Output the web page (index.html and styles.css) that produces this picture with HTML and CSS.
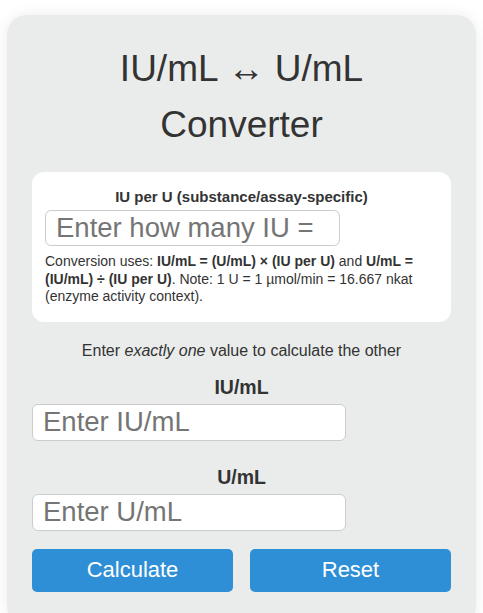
FILE: index.html
```html
<!DOCTYPE html>
<html lang="en">
<head>
    <meta charset="UTF-8">
    <title>IU/mL to U/mL Converter</title>
    <link rel="stylesheet" href="styles.css">
</head>
<body>
    <div class="card">
        <h1>IU/mL &harr; U/mL<br>Converter</h1>

        <div class="factor-box">
            <label class="factor-label" for="iuPerU">IU per U (substance/assay-specific)</label>
            <input id="iuPerU" class="factor-input" type="number" placeholder="Enter how many IU = 1 U">
            <p class="note">Conversion uses: <strong>IU/mL = (U/mL) × (IU per U)</strong> and <strong>U/mL = (IU/mL) ÷ (IU per U)</strong>. Note: 1 U = 1 µmol/min = 16.667 nkat (enzyme activity context).</p>
        </div>

        <p class="hint">Enter <em>exactly one</em> value to calculate the other</p>

        <div class="field">
            <label for="iuml">IU/mL</label>
            <input id="iuml" type="number" placeholder="Enter IU/mL">
        </div>
        <div class="field">
            <label for="uml">U/mL</label>
            <input id="uml" type="number" placeholder="Enter U/mL">
        </div>

        <div class="buttons">
            <button>Calculate</button>
            <button>Reset</button>
        </div>
    </div>
</body>
</html>
```

FILE: styles.css
```css
body { margin: 0; padding-top: 15px; font-family: "Liberation Sans", Arial, sans-serif; color: #333; background: #fff; }
.card {
    width: 419px; margin: 0 auto; padding: 26px 25px 25px; min-height: 560px;
    background: #eaeceb; border-radius: 20px; box-shadow: 0 0 14px rgba(0, 0, 0, 0.08);
}
h1 { margin: 0 0 19px; font-size: 37px; line-height: 56px; font-weight: normal; text-align: center; }
.factor-box { background: #fff; border-radius: 12px; padding: 16px 13px; }
.factor-label { display: block; text-align: center; font-size: 15px; font-weight: bold; margin-bottom: 5px; }
input {
    box-sizing: border-box; width: 75%; height: 37px; padding: 0 10px;
    font-family: "Liberation Sans", Arial, sans-serif; font-size: 27.5px; color: #333;
    border: 1px solid #ccc; border-radius: 6px; background: #fff;
}
.factor-input { height: 36px; }
input::placeholder { color: #757575; }
.note { margin: 7px 0 0; font-size: 14px; line-height: 17.5px; }
.hint { margin: 20px 0 16px; text-align: center; font-size: 16px; }
.field { margin-bottom: 25px; }
.field label { display: block; text-align: center; font-size: 19.5px; font-weight: bold; margin-bottom: 5px; }
.buttons { display: flex; gap: 17px; margin-top: -7px; }
button {
    flex: 1; height: 43px; border: none; border-radius: 5px; background: #2e8fd7;
    color: #fff; font-family: "Liberation Sans", Arial, sans-serif; font-size: 22px; cursor: pointer;
}
button:hover { background: #2780c2; }
```
